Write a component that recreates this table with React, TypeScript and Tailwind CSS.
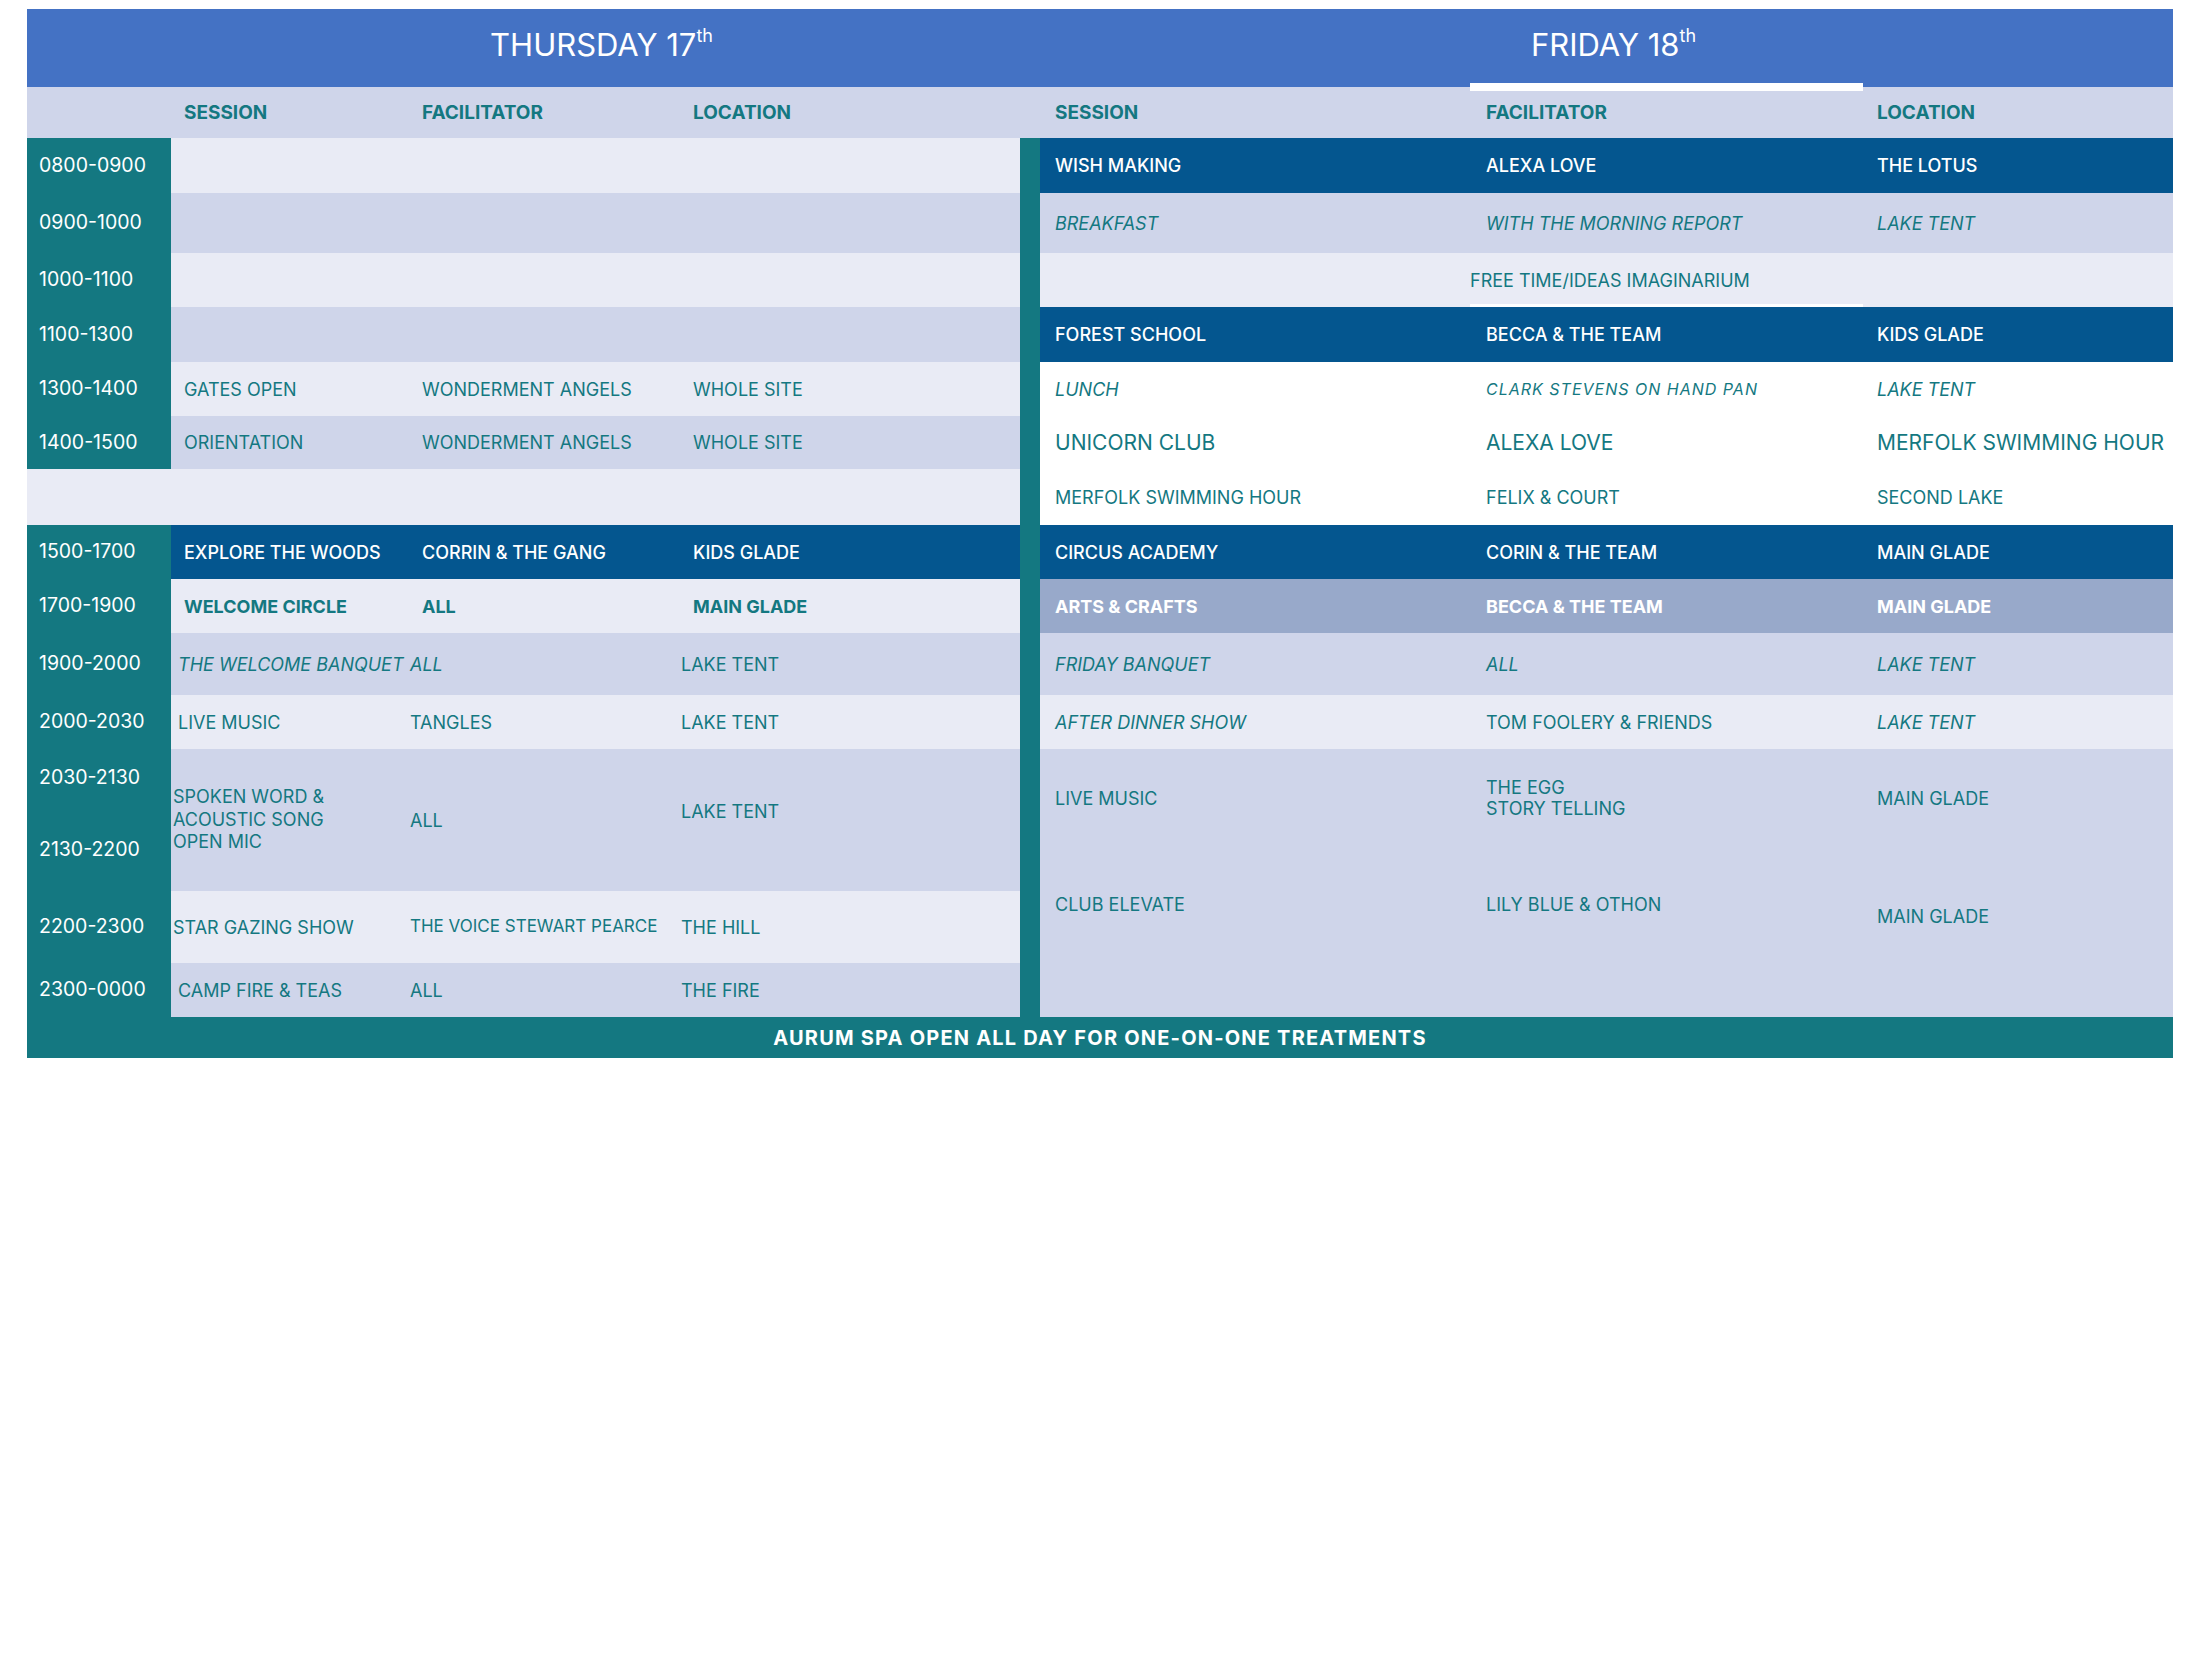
import React from 'react';

// column widths (px): time 144 | thu 237 + 272 + 340 | divider 20 | fri 430 + 393 + 310
const LIGHT = 'bg-[#E9EBF5]';
const LAV = 'bg-[#CFD5EA]';
const DARK = 'bg-[#04568F]';

function Cell({ w, className = '', children }: { w: string; className?: string; children?: React.ReactNode }) {
  return <div className={`flex h-full shrink-0 items-center whitespace-nowrap ${w} ${className}`}>{children}</div>;
}

function Row({ h, bg, className = '', children }: { h: string; bg: string; className?: string; children?: React.ReactNode }) {
  return <div className={`flex w-full ${h} ${bg} ${className}`}>{children}</div>;
}

function TimeCell({ h, label, light }: { h: string; label?: string; light?: boolean }) {
  return (
    <div className={`flex ${h} items-center pl-[12px] text-[19.5px] text-white ${light ? LIGHT : ''}`}>
      {label}
    </div>
  );
}

function ThuRow({
  h,
  bg,
  s,
  f,
  l,
  tone = 'text-[#147881]',
  pad = 'upper',
}: {
  h: string;
  bg: string;
  s?: React.ReactNode;
  f?: React.ReactNode;
  l?: React.ReactNode;
  tone?: string;
  pad?: 'upper' | 'lower';
}) {
  const up = pad === 'upper';
  return (
    <Row h={h} bg={bg} className={`text-[18px] ${tone}`}>
      <Cell w="w-[237px]" className={up ? 'pl-[13px]' : 'pl-[7px]'}>{s}</Cell>
      <Cell w="w-[272px]" className={up ? 'pl-[14px]' : 'pl-[2px]'}>{f}</Cell>
      <Cell w="w-[340px]" className={up ? 'pl-[13px]' : 'pl-[1px]'}>{l}</Cell>
    </Row>
  );
}

function FriRow({
  h,
  bg,
  s,
  f,
  l,
  tone = 'text-[#147881]',
}: {
  h: string;
  bg: string;
  s?: React.ReactNode;
  f?: React.ReactNode;
  l?: React.ReactNode;
  tone?: string;
}) {
  return (
    <Row h={h} bg={bg} className={`text-[18px] ${tone}`}>
      <Cell w="w-[430px]" className="pl-[15px]">{s}</Cell>
      <Cell w="w-[393px]" className="pl-[16px]">{f}</Cell>
      <Cell w="w-[310px]" className="pl-[14px]">{l}</Cell>
    </Row>
  );
}

export default function App() {
  return (
    <div className="min-h-[1654px] bg-white pl-[27px] pt-[9px] font-['Inter',sans-serif]">
      <div className="w-[2146px]">
        {/* day headers */}
        <div className="relative">
          <div className="flex h-[78px] bg-[#4472C4] text-white">
            <div className="w-[144px]" />
            <div className="flex w-[849px] items-center justify-center pb-[6px] pl-[12px] text-[31px]">
              THURSDAY 17<sup className="text-[18px]">th</sup>
            </div>
            <div className="w-[20px]" />
            <div className="flex w-[1133px] items-center justify-center pb-[6px] pl-[14px] text-[31px]">
              FRIDAY 18<sup className="text-[18px]">th</sup>
            </div>
          </div>
          <div className={`flex h-[51px] ${LAV} pt-[2px] text-[19px] font-bold text-[#147881]`}>
            <div className="w-[144px]" />
            <Cell w="w-[237px]" className="pl-[13px]">SESSION</Cell>
            <Cell w="w-[272px]" className="pl-[14px]">FACILITATOR</Cell>
            <Cell w="w-[340px]" className="pl-[13px]">LOCATION</Cell>
            <div className="w-[20px]" />
            <Cell w="w-[430px]" className="pl-[15px]">SESSION</Cell>
            <Cell w="w-[393px]" className="pl-[16px]">FACILITATOR</Cell>
            <Cell w="w-[310px]" className="pl-[14px]">LOCATION</Cell>
          </div>
          <span className="absolute left-[1443px] top-[74px] h-[8px] w-[393px] bg-white" />
        </div>

        {/* body */}
        <div className="flex">
          <div className="flex w-[144px] flex-col bg-[#147881]">
            <TimeCell h="h-[55px]" label="0800-0900" />
            <TimeCell h="h-[60px]" label="0900-1000" />
            <TimeCell h="h-[54px]" label="1000-1100" />
            <TimeCell h="h-[55px]" label="1100-1300" />
            <TimeCell h="h-[54px]" label="1300-1400" />
            <TimeCell h="h-[53px]" label="1400-1500" />
            <TimeCell h="h-[56px]" light />
            <TimeCell h="h-[54px]" label="1500-1700" />
            <TimeCell h="h-[54px]" label="1700-1900" />
            <TimeCell h="h-[62px]" label="1900-2000" />
            <TimeCell h="h-[54px]" label="2000-2030" />
            <div className="flex h-[142px] flex-col gap-[48px] pl-[12px] pt-[16px] text-[19.5px] leading-[24px] text-white">
              <span>2030-2130</span>
              <span>2130-2200</span>
            </div>
            <TimeCell h="h-[72px]" label="2200-2300" />
            <TimeCell h="h-[54px]" label="2300-0000" />
          </div>

          <div className="flex w-[849px] flex-col">
            <ThuRow h="h-[55px]" bg={LIGHT} />
            <ThuRow h="h-[60px]" bg={LAV} />
            <ThuRow h="h-[54px]" bg={LIGHT} />
            <ThuRow h="h-[55px]" bg={LAV} />
            <ThuRow h="h-[54px]" bg={LIGHT} s="GATES OPEN" f="WONDERMENT ANGELS" l="WHOLE SITE" />
            <ThuRow h="h-[53px]" bg={LAV} s="ORIENTATION" f="WONDERMENT ANGELS" l="WHOLE SITE" />
            <ThuRow h="h-[56px]" bg={LIGHT} />
            <ThuRow h="h-[54px]" bg={DARK} tone="text-white font-medium" s="EXPLORE THE WOODS" f="CORRIN & THE GANG" l="KIDS GLADE" />
            <ThuRow h="h-[54px]" bg={LIGHT} tone="text-[#147881] font-bold" s="WELCOME CIRCLE" f="ALL" l="MAIN GLADE" />
            <ThuRow
              h="h-[62px]"
              bg={LAV}
              pad="lower"
              s={<span className="italic">THE WELCOME BANQUET</span>}
              f={<span className="italic">ALL</span>}
              l="LAKE TENT"
            />
            <ThuRow h="h-[54px]" bg={LIGHT} pad="lower" s="LIVE MUSIC" f="TANGLES" l="LAKE TENT" />
            <Row h="h-[142px]" bg={LAV} className="text-[18px] text-[#147881]">
              <Cell w="w-[237px]" className="pl-[2px]">
                <div className="flex flex-col leading-[22.5px]">
                  <span>SPOKEN WORD &amp;</span>
                  <span>ACOUSTIC SONG</span>
                  <span>OPEN MIC</span>
                </div>
              </Cell>
              <Cell w="w-[272px]" className="pl-[2px]">ALL</Cell>
              <Cell w="w-[340px]" className="pb-[18px] pl-[1px]">LAKE TENT</Cell>
            </Row>
            <Row h="h-[72px]" bg={LIGHT} className="text-[18px] text-[#147881]">
              <Cell w="w-[237px]" className="pl-[2px]">STAR GAZING SHOW</Cell>
              <Cell w="w-[272px]" className="pl-[2px] text-[17px]">THE VOICE STEWART PEARCE</Cell>
              <Cell w="w-[340px]" className="pl-[1px]">THE HILL</Cell>
            </Row>
            <ThuRow h="h-[54px]" bg={LAV} pad="lower" s="CAMP FIRE & TEAS" f="ALL" l="THE FIRE" />
          </div>

          <div className="w-[20px] bg-[#147881]" />

          <div className="flex w-[1133px] flex-col">
            <FriRow h="h-[55px]" bg={DARK} tone="text-white font-medium" s="WISH MAKING" f="ALEXA LOVE" l="THE LOTUS" />
            <FriRow h="h-[60px]" bg={LAV} tone="text-[#147881] italic" s="BREAKFAST" f="WITH THE MORNING REPORT" l="LAKE TENT" />
            <Row h="h-[54px]" bg={LIGHT} className="text-[18px] text-[#147881]">
              <Cell w="w-[430px]" />
              <Cell w="w-[393px]" className="border-b-[3px] border-white pt-[3px]">
                FREE TIME/IDEAS IMAGINARIUM
              </Cell>
              <Cell w="w-[310px]" />
            </Row>
            <FriRow h="h-[55px]" bg={DARK} tone="text-white font-medium" s="FOREST SCHOOL" f="BECCA & THE TEAM" l="KIDS GLADE" />
            <FriRow
              h="h-[54px]"
              bg="bg-white"
              tone="text-[#147881] italic"
              s="LUNCH"
              f={<span className="text-[16px] tracking-[1px]">CLARK STEVENS ON HAND PAN</span>}
              l="LAKE TENT"
            />
            <FriRow h="h-[53px]" bg="bg-white" tone="text-[#147881] text-[21px]" s="UNICORN CLUB" f="ALEXA LOVE" l="MERFOLK SWIMMING HOUR" />
            <FriRow h="h-[56px]" bg="bg-white" s="MERFOLK SWIMMING HOUR" f="FELIX & COURT" l="SECOND LAKE" />
            <FriRow h="h-[54px]" bg={DARK} tone="text-white font-medium" s="CIRCUS ACADEMY" f="CORIN & THE TEAM" l="MAIN GLADE" />
            <FriRow h="h-[54px]" bg="bg-[#98A9CA]" tone="text-white font-bold" s="ARTS & CRAFTS" f="BECCA & THE TEAM" l="MAIN GLADE" />
            <FriRow h="h-[62px]" bg={LAV} tone="text-[#147881] italic" s="FRIDAY BANQUET" f="ALL" l="LAKE TENT" />
            <FriRow
              h="h-[54px]"
              bg={LIGHT}
              s={<span className="italic">AFTER DINNER SHOW</span>}
              f="TOM FOOLERY & FRIENDS"
              l={<span className="italic">LAKE TENT</span>}
            />
            <div className={`flex h-[268px] flex-col ${LAV} text-[18px] text-[#147881]`}>
              <div className="flex h-[98px]">
                <Cell w="w-[430px]" className="pl-[15px]">LIVE MUSIC</Cell>
                <Cell w="w-[393px]" className="pl-[16px]">
                  <div className="flex flex-col leading-[21.5px]">
                    <span>THE EGG</span>
                    <span>STORY TELLING</span>
                  </div>
                </Cell>
                <Cell w="w-[310px]" className="pl-[14px]">MAIN GLADE</Cell>
              </div>
              <div className="flex h-[170px] items-start leading-[24px]">
                <div className="w-[430px] pl-[15px] pt-[46px]">CLUB ELEVATE</div>
                <div className="w-[393px] pl-[16px] pt-[46px]">LILY BLUE &amp; OTHON</div>
                <div className="w-[310px] pl-[14px] pt-[58px]">MAIN GLADE</div>
              </div>
            </div>
          </div>
        </div>

        {/* footer */}
        <div className="flex h-[41px] items-center justify-center bg-[#147881] text-[20px] font-bold tracking-[0.06em] text-white">
          AURUM SPA OPEN ALL DAY FOR ONE-ON-ONE TREATMENTS
        </div>
      </div>
    </div>
  );
}
